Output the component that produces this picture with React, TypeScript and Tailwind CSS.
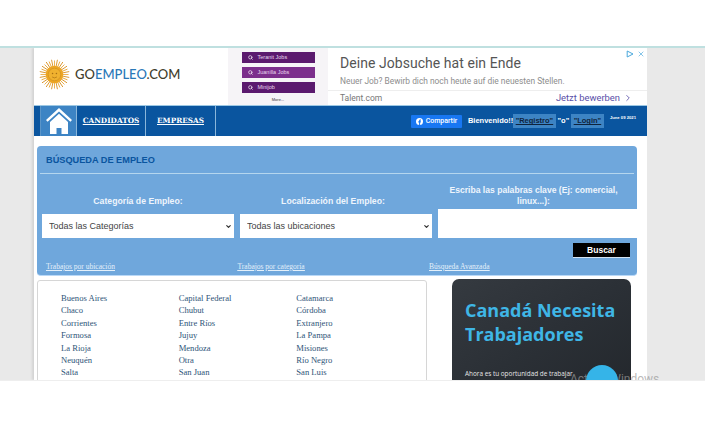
import { Search, X, ChevronRight, ChevronDown } from 'lucide-react'

const provinces = [
  'Buenos Aires', 'Capital Federal', 'Catamarca',
  'Chaco', 'Chubut', 'Córdoba',
  'Corrientes', 'Entre Ríos', 'Extranjero',
  'Formosa', 'Jujuy', 'La Pampa',
  'La Rioja', 'Mendoza', 'Misiones',
  'Neuquén', 'Otra', 'Río Negro',
  'Salta', 'San Juan', 'San Luis',
]

const sunRays = Array.from({ length: 32 }, (_, i) => (i * 360) / 32)

function SunLogo() {
  return (
    <svg width="31" height="31" viewBox="0 0 32 32" className="shrink-0">
      {sunRays.map((angle, i) => (
        <line
          key={angle}
          x1="16"
          y1="16"
          x2="16"
          y2={i % 2 ? 0.5 : 1.5}
          stroke={i % 2 ? '#d9932a' : '#eaa93c'}
          strokeWidth="0.9"
          transform={`rotate(${angle} 16 16)`}
        />
      ))}
      <circle cx="16" cy="16" r="9" fill="#eda623" />
      <circle cx="16" cy="16" r="6.5" fill="#f0b12f" stroke="#c98a1f" strokeWidth="0.6" />
      <circle cx="14" cy="15" r="0.8" fill="#a86f14" />
      <circle cx="18" cy="15" r="0.8" fill="#a86f14" />
      <path d="M13.5 18.5 Q16 20.5 18.5 18.5" fill="none" stroke="#a86f14" strokeWidth="0.7" />
    </svg>
  )
}

function HomeIcon() {
  return (
    <svg width="26" height="26" viewBox="0 0 26 26" fill="white">
      <path d="M13 0 L26 12 L24.4 13.8 L13 3.4 L1.6 13.8 L0 12 Z" />
      <path d="M4 14 L13 5.8 L22 14 V26 H15.5 V20 H10.5 V26 H4 Z" />
    </svg>
  )
}

function AdRow({ label, light }: { label: string; light?: boolean }) {
  return (
    <div className={`flex h-[11px] w-[73px] items-center gap-[5px] pl-[6px] text-[5.5px] text-[#e8d8ee] ${light ? 'bg-[#7c2f8c]' : 'bg-[#5b1a6e]'}`}>
      <Search size={5} strokeWidth={3} className="text-white" />
      <span>{label}</span>
    </div>
  )
}

function SearchColumn({ label, value, shifted }: { label: string; value: string; shifted?: boolean }) {
  return (
    <div className="flex flex-col">
      <div className={`flex h-[40px] items-end justify-center pb-[7px] text-center text-[8.7px] leading-[11px] font-bold text-[#eef5fc] ${shifted ? 'pr-[6px]' : ''}`}>
        {label}
      </div>
      <div className="relative h-[24px] w-full">
        <select className="block h-full w-full appearance-none bg-white pt-[2px] pl-[7px] text-[9px] text-[#444] outline-none">
          <option>{value}</option>
        </select>
        <ChevronDown size={7} strokeWidth={4} className="pointer-events-none absolute top-[9px] right-[2px] text-[#333]" />
      </div>
    </div>
  )
}

export default function App() {
  return (
    <div className="relative flex h-[427px] w-[705px] flex-col overflow-hidden bg-white font-['Liberation_Sans',sans-serif]">
      <div className="h-[46px] shrink-0 bg-white" />
      <div className="h-[2px] shrink-0 bg-[#bfe0e0]" />

      <main className="h-[332px] shrink-0 overflow-hidden bg-[#e9e9e9] pl-[34px]">
        <div className="h-full w-[613px] bg-white shadow-[-2px_0_2px_#d4d4d4]">
          {/* Logo and ad */}
          <header className="flex h-[57px]">
            <div className="flex w-[194px] items-center gap-[5px] pb-[4px] pl-[5px]">
              <SunLogo />
              <span className="font-['Lato',sans-serif] text-[13px] font-medium text-[#3f3d2c]">
                GO<span className="text-[#2a78b8]">EMPLEO</span>.COM
              </span>
            </div>
            <div className="flex w-[100px] flex-col items-center gap-[4px] bg-[#f6f4f7] pt-[4px]">
              <AdRow label="Teranit Jobs" />
              <AdRow label="Juanilla Jobs" light />
              <AdRow label="Minijob" />
              <span className="text-[4px] leading-[5px] text-[#333]">More...</span>
            </div>
            <div className="relative flex min-w-0 flex-1 flex-col font-['Roboto',sans-serif]">
              <div className="flex h-[44px] flex-col border-b border-[#eeeeee] pl-[12px]">
                <span className="pt-[3px] text-[14px] leading-[24px] tracking-[0.05px] whitespace-nowrap text-[#555]">Deine Jobsuche hat ein Ende</span>
                <span className="text-[8.4px] leading-[12px] whitespace-nowrap text-[#8d8d8d]">Neuer Job? Bewirb dich noch heute auf die neuesten Stellen.</span>
              </div>
              <div className="flex flex-1 items-center justify-between pr-[14px] pl-[12px] text-[8.5px]">
                <span className="text-[#777]">Talent.com</span>
                <span className="flex items-center gap-[3px] text-[9.4px] text-[#5a4fa8]">
                  Jetzt bewerben
                  <ChevronRight size={10} strokeWidth={2} />
                </span>
              </div>
              <div className="absolute top-[2px] right-[2px] flex items-center gap-[3px] text-[#4aa8dc]">
                <svg width="8" height="8" viewBox="0 0 8 8" fill="none" stroke="currentColor" strokeWidth="1">
                  <path d="M1.2 1 L7 4 L1.2 7 Z" />
                </svg>
                <X size={8} strokeWidth={2} />
              </div>
            </div>
          </header>

          {/* Nav */}
          <nav className="flex h-[31px] items-stretch border-t border-[#9cc8e4] bg-[#0a559f] text-white">
            <div className="w-[7px] border-r border-[#5b95c8]" />
            <div className="flex w-[36px] items-center justify-center border-r border-[#8ab6da] bg-[#3d84c4]">
              <HomeIcon />
            </div>
            <a className="flex w-[69px] items-center justify-center border-r border-[#8ab6da] font-['DejaVu_Serif',serif] text-[7.3px] font-bold underline">CANDIDATOS</a>
            <a className="flex w-[70px] items-center justify-center border-r border-[#8ab6da] font-['DejaVu_Serif',serif] text-[7.3px] font-bold underline">EMPRESAS</a>
            <div className="flex flex-1 items-center justify-end pr-[11px]">
              <div className="flex h-[13px] w-[51px] items-center justify-center gap-[3px] rounded-[1px] bg-[#1877f2] font-['Roboto',sans-serif] text-[7px] font-medium">
                <svg width="7" height="7" viewBox="0 0 7 7">
                  <circle cx="3.5" cy="3.5" r="3.5" fill="white" />
                  <path d="M3.1 7 V4.4 H2.3 V3.3 H3.1 V2.6 C3.1 1.8 3.6 1.4 4.3 1.4 H5 V2.4 H4.6 C4.2 2.4 4.1 2.6 4.1 2.9 V3.3 H5 L4.8 4.4 H4.1 V7 Z" fill="#1877f2" />
                </svg>
                Compartir
              </div>
              <span className="ml-[6px] w-[45px] text-[7.5px] font-bold whitespace-nowrap">Bienvenido!!</span>
              <a className="flex h-[14px] w-[43px] items-center justify-center bg-[#3d84c4] text-[7.5px] font-bold text-[#10233c] underline">"Registro"</a>
              <span className="w-[15px] text-center text-[7.5px] font-bold">"o"</span>
              <a className="flex h-[14px] w-[33px] items-center justify-center bg-[#3d84c4] text-[7.5px] font-bold text-[#10233c] underline">"Login"</a>
              <span className="mb-[6px] ml-[6px] text-[4.2px] font-bold">June 09 2021</span>
            </div>
          </nav>

          {/* Search panel */}
          <section className="mt-[10px] ml-[3px] h-[130px] w-[600px] rounded-[4px] border-b border-[#b9d8f7] bg-[#6fa7dc]">
            <h2 className="flex h-[27px] items-center pt-[2px] pl-[9px] text-[9.2px] font-bold text-[#0a559f]">BÚSQUEDA DE EMPLEO</h2>
            <div className="mx-[3px] h-px bg-[#b5d6ee]" />
            <div className="ml-[5px] grid h-[64px] grid-cols-[192px_192px_201px] items-end gap-x-[6px]">
              <SearchColumn label="Categoría de Empleo:" value="Todas las Categorías" />
              <SearchColumn label="Localización del Empleo:" value="Todas las ubicaciones" shifted />
              <div className="flex flex-col">
                <div className="flex h-[35px] items-end justify-center pr-[10px] pb-[2px] text-center text-[8.6px] leading-[11px] font-bold text-[#eef5fc]">
                  Escriba las palabras clave (Ej: comercial, linux...):
                </div>
                <input className="h-[29px] w-full bg-white outline-none" />
              </div>
            </div>
            <div className="flex justify-end pt-[5px] pr-[7px]">
              <button className="h-[15px] w-[57px] border-b border-[#d5e4f2] bg-black text-[8.5px] font-bold text-white">Buscar</button>
            </div>
            <div className="ml-[9px] flex pt-[1px] font-['Liberation_Serif',serif] text-[7.5px] leading-[16px] text-[#e4f0fa] underline">
              <a className="w-[191.5px]">Trabajos por ubicación</a>
              <a className="w-[191.5px]">Trabajos por categoría</a>
              <a>Búsqueda Avanzada</a>
            </div>
          </section>

          {/* Locations and promo */}
          <div className="mt-[4px] ml-[3px] flex items-start">
            <div className="h-[120px] w-[390px] rounded-[3px] border border-[#d6d6d6] pt-[11px] pl-[23px]">
              <ul className="grid w-[353px] grid-cols-3 font-['Liberation_Serif',serif] text-[8.6px] leading-[12.4px] text-[#2e5478]">
                {provinces.map((name) => (
                  <li key={name}>{name}</li>
                ))}
              </ul>
            </div>
            <div className="mt-[-1px] ml-[25px] h-[120px] w-[179px] rounded-[7px] bg-gradient-to-br from-[#353a40] via-[#2b3036] to-[#23272c] pt-[19px] pl-[13px] font-['Open_Sans',sans-serif]">
              <p className="text-[18px] leading-[24px] font-bold whitespace-nowrap text-[#3fb6e6]">Canadá Necesita<br />Trabajadores</p>
              <p className="mt-[23px] text-[6.4px] leading-[10px] whitespace-nowrap text-[#e6e6e6]">Ahora es tu oportunidad de trabajar</p>
            </div>
          </div>
        </div>
      </main>

      <div className="flex-1 border-t border-[#eeeeee] bg-white" />

      {/* Cropped watermark and chat bubble at the fold */}
      <span className="absolute top-[372px] left-[570px] h-[8px] overflow-hidden font-['Roboto',sans-serif] text-[12px] leading-[14px] whitespace-nowrap text-[#9a9a9a]/70">Activar Windows</span>
      <div className="absolute top-[365px] left-[586px] h-[15px] w-[32px] overflow-hidden">
        <div className="h-[32px] w-[32px] rounded-full bg-[#35b4e8]" />
      </div>
    </div>
  )
}
